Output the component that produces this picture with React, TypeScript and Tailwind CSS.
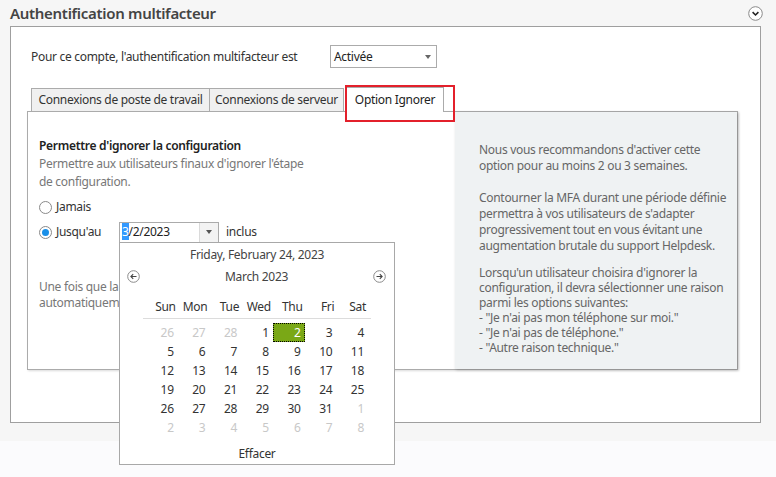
import React from "react";

const font = "font-['Noto_Sans',_'Open_Sans',_sans-serif] tracking-[-0.3px]";

const weeks: { d: number; muted?: boolean; selected?: boolean }[][] = [
  [{ d: 26, muted: true }, { d: 27, muted: true }, { d: 28, muted: true }, { d: 1 }, { d: 2, selected: true }, { d: 3 }, { d: 4 }],
  [{ d: 5 }, { d: 6 }, { d: 7 }, { d: 8 }, { d: 9 }, { d: 10 }, { d: 11 }],
  [{ d: 12 }, { d: 13 }, { d: 14 }, { d: 15 }, { d: 16 }, { d: 17 }, { d: 18 }],
  [{ d: 19 }, { d: 20 }, { d: 21 }, { d: 22 }, { d: 23 }, { d: 24 }, { d: 25 }],
  [{ d: 26 }, { d: 27 }, { d: 28 }, { d: 29 }, { d: 30 }, { d: 31 }, { d: 1, muted: true }],
  [{ d: 2, muted: true }, { d: 3, muted: true }, { d: 4, muted: true }, { d: 5, muted: true }, { d: 6, muted: true }, { d: 7, muted: true }, { d: 8, muted: true }],
];

const dayNames = ["Sun", "Mon", "Tue", "Wed", "Thu", "Fri", "Sat"];

function ArrowCircle({ dir }: { dir: "left" | "right" }) {
  return (
    <svg width="13" height="13" viewBox="0 0 13 13">
      <circle cx="6.5" cy="6.5" r="5.8" fill="white" stroke="#8a8a8a" strokeWidth="1" />
      {dir === "left" ? (
        <path d="M9.5 6.5H4 M6.2 4.2L3.9 6.5L6.2 8.8" fill="none" stroke="#444" strokeWidth="1.1" />
      ) : (
        <path d="M3.5 6.5H9 M6.8 4.2L9.1 6.5L6.8 8.8" fill="none" stroke="#444" strokeWidth="1.1" />
      )}
    </svg>
  );
}

function Radio({ checked }: { checked?: boolean }) {
  return (
    <span className="flex h-[13px] w-[13px] items-center justify-center rounded-full border border-[#8a8a8a] bg-white">
      {checked && <span className="h-[7px] w-[7px] rounded-full bg-[#1a8fe8]" />}
    </span>
  );
}

function DatePicker() {
  return (
    <div className="absolute left-0 top-[20px] z-10 h-[223px] w-[276px] border border-[#a8a8a8] bg-white">
      <p className="mt-[2px] text-center text-[12px] leading-[20px] text-[#444]">Friday, February 24, 2023</p>
      <div className="flex h-[24px] items-center justify-between pl-[7px] pr-[8px]">
        <ArrowCircle dir="left" />
        <span className="text-[12px] text-[#444]">March 2023</span>
        <ArrowCircle dir="right" />
      </div>
      <div className="ml-[23px] mt-[9px] w-[228px]">
        <div className="grid grid-cols-7 border-b border-[#dcdcdc] px-[3px] pb-[2px]">
          {dayNames.map((n) => (
            <span key={n} className="whitespace-nowrap pr-[2px] text-right text-[12px] leading-[18px] text-[#333]">
              {n}
            </span>
          ))}
        </div>
        <div className="mt-[4px] px-[3px]">
          {weeks.map((week, i) => (
            <div key={i} className="grid grid-cols-7">
              {week.map((c, j) => (
                <span
                  key={j}
                  className={
                    c.selected
                      ? "h-[19px] border border-dotted border-black bg-[#7aa816] pr-[3px] text-right text-[12px] leading-[17px] text-white"
                      : c.muted
                        ? "h-[19px] pr-[4px] text-right text-[12px] leading-[19px] text-[#c8c8c8]"
                        : "h-[19px] pr-[4px] text-right text-[12px] leading-[19px] text-[#333]"
                  }
                >
                  {c.d}
                </span>
              ))}
            </div>
          ))}
        </div>
      </div>
      <p className="mt-[8px] text-center text-[12px] leading-[18px] text-[#333]">Effacer</p>
    </div>
  );
}

export default function App() {
  return (
    <div className={`relative h-[477px] w-[776px] overflow-hidden bg-[#fbfbfd] ${font}`}>
      <div className="h-[441px] bg-[#f6f6f6] px-[10px]">
        <div className="flex h-[26px] items-center justify-between">
          <h1 className="text-[15px] font-semibold text-[#444]">Authentification multifacteur</h1>
          <svg width="15" height="15" viewBox="0 0 15 15" className="mr-[3px] mt-[1px]">
            <circle cx="7.5" cy="7.5" r="6.8" fill="white" stroke="#8a8a8a" strokeWidth="1" />
            <path d="M4.6 6.2L7.5 9L10.4 6.2" fill="none" stroke="#222" strokeWidth="1.6" />
          </svg>
        </div>

        <div className="h-[397px] w-[751px] border border-[#9f9f9f] bg-white">
          <div className="mt-[18px] flex items-center pl-[20px]">
            <span className="w-[299px] text-[12px] text-[#333]">Pour ce compte, l'authentification multifacteur est</span>
            <div className="flex h-[23px] w-[107px] items-center justify-between border border-[#ababab] bg-white pl-[3px] pr-[5px]">
              <span className="text-[12px] text-[#222]">Activée</span>
              <span className="h-0 w-0 border-x-[3.5px] border-t-[4px] border-x-transparent border-t-[#666]" />
            </div>
          </div>

          <div className="ml-[16px] mt-[19px] w-[711px]">
            <div className="relative flex h-[24px] items-end pl-[4px]">
              <div className="flex h-[23px] w-[179px] items-center justify-center border border-b-0 border-[#ababab] bg-[#f0f0f0] text-[12px] text-[#333]">
                Connexions de poste de travail
              </div>
              <div className="flex h-[23px] w-[134px] items-center justify-center border border-b-0 border-l-0 border-[#ababab] bg-[#f0f0f0] text-[12px] text-[#333]">
                Connexions de serveur
              </div>
              <div className="relative z-[1] ml-[2px] -mb-px flex h-[25px] w-[98px] items-start justify-center border border-b-0 border-[#ababab] bg-white pt-[3px] text-[12px] text-[#222]">
                Option Ignorer
              </div>
              <div className="absolute left-[318px] top-[-2px] z-[2] h-[37px] w-[110px] border-2 border-[#e3202b]" />
            </div>

            <div className="flex h-[259px] border border-[#ababab] shadow-[1px_1px_2px_rgba(0,0,0,0.15)]">
              <div className="w-[427px] pl-[11px] pt-[25px]">
                <p className="text-[12px] font-semibold leading-[18px] text-[#222]">Permettre d'ignorer la configuration</p>
                <p className="text-[12px] leading-[18px] text-[#777]">
                  Permettre aux utilisateurs finaux d'ignorer l'étape
                  <br />
                  de configuration.
                </p>
                <div className="mt-[7px] flex h-[18px] items-center gap-[4px] text-[12px] text-[#333]">
                  <Radio />
                  <span>Jamais</span>
                </div>
                <div className="mt-[5px] flex h-[22px] items-center text-[12px] text-[#333]">
                  <Radio checked />
                  <span className="ml-[4px] w-[63px]">Jusqu'au</span>
                  <div className="relative">
                    <div className="flex h-[21px] w-[100px] items-center border border-[#ababab] bg-white">
                      <span className="ml-[2px] flex-1 text-[12px] text-[#222]">
                        <span className="bg-[#3399ff] text-white">3</span>/2/2023
                      </span>
                      <span className="flex h-full w-[19px] items-center justify-center border-l border-[#dadada] bg-[#f3f3f3]">
                        <span className="h-0 w-0 border-x-[3.5px] border-t-[4px] border-x-transparent border-t-[#555]" />
                      </span>
                    </div>
                    <DatePicker />
                  </div>
                  <span className="ml-[7px]">inclus</span>
                </div>
                <p className="mt-[36px] w-[395px] text-[12px] leading-[16px] text-[#777]">
                  Une fois que la période est écoulée, l'option d'ignorer est automatiquement désactivée.
                </p>
              </div>
              <div className="flex-1 whitespace-nowrap bg-[#eff2f3] pl-[24px] pt-[30px] text-[12px] leading-[16px] text-[#666] shadow-[1px_1px_3px_rgba(0,0,0,0.2)]">
                <p>
                  Nous vous recommandons d'activer cette
                  <br />
                  option pour au moins 2 ou 3 semaines.
                </p>
                <p className="mt-[16px]">
                  Contourner la MFA durant une période définie
                  <br />
                  permettra à vos utilisateurs de s'adapter
                  <br />
                  progressivement tout en vous évitant une
                  <br />
                  augmentation brutale du support Helpdesk.
                </p>
                <p className="mt-[11px] leading-[15px]">
                  Lorsqu'un utilisateur choisira d'ignorer la
                  <br />
                  configuration, il devra sélectionner une raison
                  <br />
                  parmi les options suivantes:
                  <br />- "Je n'ai pas mon téléphone sur moi."
                  <br />- "Je n'ai pas de téléphone."
                  <br />- "Autre raison technique."
                </p>
              </div>
            </div>
          </div>
        </div>
      </div>
    </div>
  );
}
